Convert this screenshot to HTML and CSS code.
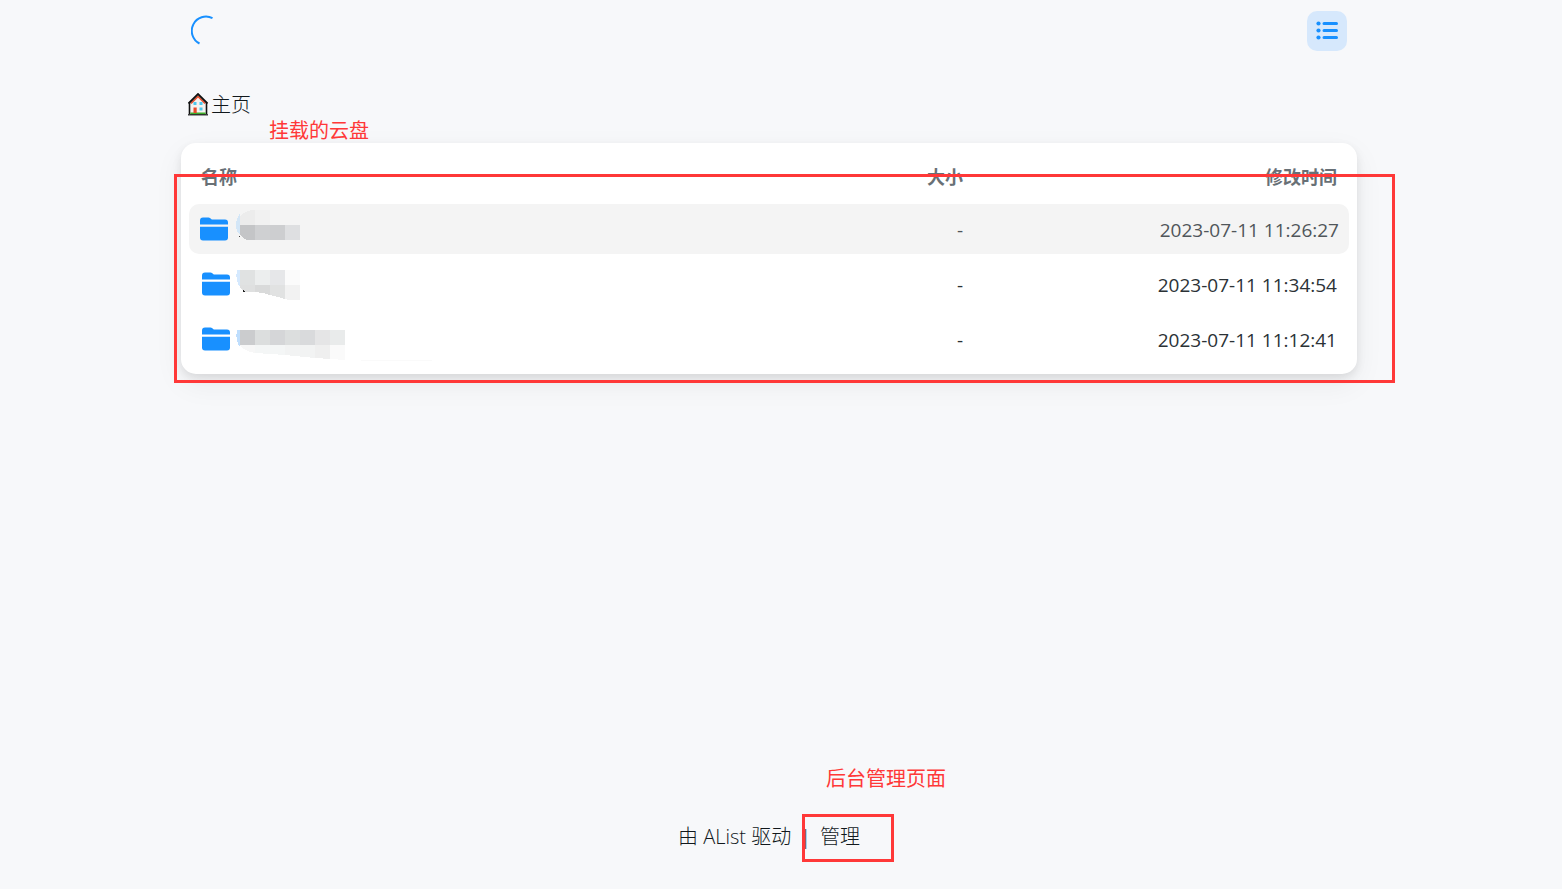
FILE: index.html
```
<!DOCTYPE html>
<html lang="zh-CN">
<head>
    <meta charset="UTF-8">
    <meta name="viewport" content="width=device-width, initial-scale=1.0">
    <title>主页 | AList</title>
    <link rel="stylesheet" href="styles.css">
</head>
<body>

    <!-- Folder icon shared by all rows -->
    <svg class="defs" aria-hidden="true">
        <symbol id="folder" viewBox="0 0 30 30">
            <path d="M1 11V6.500Q1 3.500 4 3.500H9.500Q10.500 3.500 11.300 4.200L12.800 5.500H26Q29 5.500 29 8.500V10.600H1Z"/>
            <path d="M1 12.800H29V23.500Q29 26.500 26 26.500H4Q1 26.500 1 23.500Z"/>
        </symbol>
    </svg>

    <!-- Header -->
    <header class="header">
        <svg class="spinner" viewBox="0 0 32 32" role="img" aria-label="加载中">
            <path d="M21.500 3.200A14 14 0 0 0 8.500 28.500"/>
        </svg>
        <button class="layout-btn" type="button" aria-label="列表">
            <svg viewBox="0 0 24 24">
                <circle cx="3.500" cy="4.500" r="2.100"/>
                <circle cx="3.500" cy="11.500" r="2.100"/>
                <circle cx="3.500" cy="18.500" r="2.100"/>
                <path d="M9 4.500H21.500M9 11.500H21.500M9 18.500H21.500"/>
            </svg>
        </button>
    </header>

    <!-- Breadcrumb -->
    <nav class="crumbs">
        <a href="#">
            <svg viewBox="0 0 22 24" aria-hidden="true">
                <path d="M3.500 10L11 2.500L18.500 10V21H3.500Z" fill="#f5f3f0"/>
                <path d="M4 10.500L11 3.500L18 10.500" fill="none" stroke="#e8502f" stroke-width="1.600"/>
                <path d="M1.500 10.500L11 1L20.500 10.500" fill="none" stroke="#111" stroke-width="1.800"/>
                <path d="M2.500 10V21M19.500 10V21" stroke="#111" stroke-width="1.600"/>
                <path d="M3.300 20.500H18.700" stroke="#3fae2a" stroke-width="2"/>
                <path d="M1 21.800H21" stroke="#111" stroke-width="1.200"/>
                <path d="M6.500 14.500H9.700V20H6.500Z" fill="#e84a2b"/>
                <path d="M6.500 9H9.500V12H6.500ZM12.500 9H15.500V12H12.500ZM12.500 14.500H15.500V17.500H12.500Z" fill="#4cc8ee"/>
            </svg>
            <span>主页</span>
        </a>
    </nav>

    <!-- File list -->
    <main class="card">
        <table class="files">
            <thead>
                <tr>
                    <th class="name">名称</th>
                    <th class="size">大小</th>
                    <th class="time">修改时间</th>
                </tr>
            </thead>
            <tbody>
                <tr class="active">
                    <td class="name">
                        <div class="entry">
                            <svg class="folder"><use href="#folder"/></svg>
                            <svg class="mask" viewBox="0 0 200 44">
                                <path d="M4 6Q0 12 0 19Q0 24 4 28Z" fill="#d3e6f7"/>
                                <path d="M4 18V10Q9 3 19 3V18Z" fill="#ececec"/>
                                <path d="M19 3H34V18H19Z" fill="#f1f1f1"/>
                                <path d="M4 18H19V33H12Q7 32 4 27Z" fill="#c4c5c7"/>
                                <path d="M19 18H34V33H19Z" fill="#cfd0d2"/>
                                <path d="M34 18H49V33H34Z" fill="#cdced0"/>
                                <path d="M49 18H64V33H49Z" fill="#dedfe1"/>
                                <path d="M3 29H4V30H3Z" fill="#444"/>
                            </svg>
                        </div>
                    </td>
                    <td class="size">-</td>
                    <td class="time">2023-07-11 11:26:27</td>
                </tr>
                <tr>
                    <td class="name">
                        <div class="entry">
                            <svg class="folder"><use href="#folder"/></svg>
                            <svg class="mask" viewBox="0 0 200 44">
                                <path d="M1 8H4V25Q-1 18 1 8Z" fill="#d5e9fe"/>
                                <path d="M4 8H19V23H4Z" fill="#e0e2e2"/>
                                <path d="M19 8H34V23H19Z" fill="#eceeee"/>
                                <path d="M34 8H49V23H34Z" fill="#e6e7e9"/>
                                <path d="M49 8H64V23H49Z" fill="#fbfbfb"/>
                                <path d="M4 23H19V30H10Q6 28 4 25Z" fill="#dfe0e0"/>
                                <path d="M19 23H34V33L27 31L19 30Z" fill="#d9dada"/>
                                <path d="M34 23H49V37L42 35L34 33Z" fill="#e1e2e2"/>
                                <path d="M49 23H64V38H52L49 37Z" fill="#f2f2f2"/>
                                <path d="M7 28L9 30H7Z" fill="#222"/>
                            </svg>
                        </div>
                    </td>
                    <td class="size">-</td>
                    <td class="time">2023-07-11 11:34:54</td>
                </tr>
                <tr>
                    <td class="name">
                        <div class="entry">
                            <svg class="folder"><use href="#folder"/></svg>
                            <svg class="mask" viewBox="0 0 200 44">
                                <path d="M1 13H4V30Q-1 23 1 13Z" fill="#bfdefd"/>
                                <path d="M4 13H19V28H4Z" fill="#cbccce"/>
                                <path d="M19 13H34V28H19Z" fill="#dcdede"/>
                                <path d="M34 13H49V28H34Z" fill="#d5d6d8"/>
                                <path d="M49 13H64V28H49Z" fill="#dcdede"/>
                                <path d="M64 13H79V28H64Z" fill="#d9dadc"/>
                                <path d="M79 13H94V28H79Z" fill="#e5e5e6"/>
                                <path d="M94 13H109V28H94Z" fill="#e9ebeb"/>
                                <path d="M3 28H19V36Q8 34 3 28Z" fill="#f7f7f7"/>
                                <path d="M19 28H49V38L19 36Z" fill="#f4f6f6"/>
                                <path d="M49 28H79V41L49 38Z" fill="#f2f3f3"/>
                                <path d="M79 28H94V42L79 41Z" fill="#efefef"/>
                                <path d="M94 28H109V43L94 42Z" fill="#fafafa"/>
                                <path d="M110 43H199L193 44H140Z" fill="#fafafa"/>
                            </svg>
                        </div>
                    </td>
                    <td class="size">-</td>
                    <td class="time">2023-07-11 11:12:41</td>
                </tr>
            </tbody>
        </table>
        <span class="note note-files">挂载的云盘</span>
        <div class="frame frame-files"></div>
    </main>

    <!-- Footer -->
    <footer class="footer">
        <a href="#">由 AList 驱动</a>
        <span>|</span>
        <div class="manage">
            <a href="#">管理</a>
            <span class="note note-manage">后台管理页面</span>
            <div class="frame frame-manage"></div>
        </div>
    </footer>

</body>
</html>
```
FILE: styles.css
```
/* General Page Styling */
* {
    box-sizing: border-box;
}

body {
    margin: 0;
    padding: 0 205px 0 181px;
    min-height: 100vh;
    display: flex;
    flex-direction: column;
    background: #f7f8fa;
    color: #11181c;
    font-family: "Open Sans", "Noto Sans CJK SC", sans-serif;
    font-size: 20px;
    font-weight: 300;
    line-height: 30px;
}

a {
    color: inherit;
    text-decoration: none;
}

.defs {
    position: absolute;
    width: 0;
    height: 0;
}

/* Header */
.header {
    display: flex;
    justify-content: space-between;
    align-items: center;
    padding: 11px 10px;
}

.spinner {
    width: 32px;
    height: 32px;
    fill: none;
    stroke: #1890ff;
    stroke-width: 2;
}

.layout-btn {
    display: flex;
    align-items: center;
    justify-content: center;
    width: 40px;
    height: 40px;
    padding: 0;
    border: none;
    border-radius: 10px;
    background: #d6e8fc;
    cursor: pointer;
}

.layout-btn svg {
    width: 24px;
    height: 24px;
    fill: #1890ff;
    stroke: #1890ff;
    stroke-width: 0;
}

.layout-btn path {
    stroke-width: 3;
    stroke-linecap: round;
}

/* Breadcrumb */
.crumbs {
    padding: 28px 6px 23px;
}

.crumbs a {
    display: inline-flex;
    align-items: center;
    gap: 2px;
    vertical-align: top;
}

.crumbs svg {
    width: 22px;
    height: 24px;
}

/* File list */
.card {
    position: relative;
    padding: 5px 8px;
    border-radius: 15px;
    background: white;
    box-shadow: 0 10px 30px rgba(0, 0, 0, 0.06), 0 4px 10px rgba(0, 0, 0, 0.09);
}

.files {
    width: 100%;
    table-layout: fixed;
    border-collapse: separate;
    border-spacing: 0 5px;
}

.files th {
    height: 46px;
    padding: 2px 12px 0;
    color: #687076;
    font-size: 18px;
    font-weight: bold;
    text-align: right;
}

.files td {
    height: 50px;
    padding: 2px 12px 0;
    color: #2b3236;
    font-size: 19px;
    font-weight: 400;
    text-align: right;
}

.files .name {
    width: 50%;
    text-align: left;
}

.files td.name {
    padding-top: 0;
}

.files .size {
    width: 206px;
}

.files .active td {
    background: #f4f4f4;
    color: #50565a;
}

.files .active td:first-child {
    padding-left: 10px;
    border-radius: 10px 0 0 10px;
}

.files .active td:last-child {
    padding-right: 10px;
    border-radius: 0 10px 10px 0;
}

.entry {
    display: flex;
    align-items: center;
    gap: 5px;
}

.active .entry {
    gap: 7px;
}

.folder {
    width: 30px;
    height: 30px;
    fill: #1890ff;
}

.mask {
    width: 200px;
    height: 44px;
    shape-rendering: crispEdges;
}

/* Red notes and frames */
.note {
    position: absolute;
    color: #ff3838;
    font-size: 20px;
    font-weight: 400;
    white-space: nowrap;
}

.note-files {
    top: -27px;
    left: 88px;
}

.note-manage {
    bottom: 58px;
    left: 6px;
}

.frame {
    position: absolute;
    border: 3px solid #ff3838;
    pointer-events: none;
}

.frame-files {
    top: 31px;
    right: -38px;
    bottom: -9px;
    left: -7px;
}

.frame-manage {
    top: -8px;
    right: -34px;
    bottom: -10px;
    left: -18px;
}

/* Footer */
.footer {
    display: flex;
    justify-content: center;
    gap: 9px;
    margin-top: auto;
    padding: 40px 0 37px;
}

.manage {
    position: relative;
}

/* Responsive Layout */
@media screen and (max-width: 1000px) {
    body {
        padding: 0 50px 0 20px;
    }

    .files .size {
        width: 80px;
    }

    .files .name {
        width: 40%;
    }
}
```
